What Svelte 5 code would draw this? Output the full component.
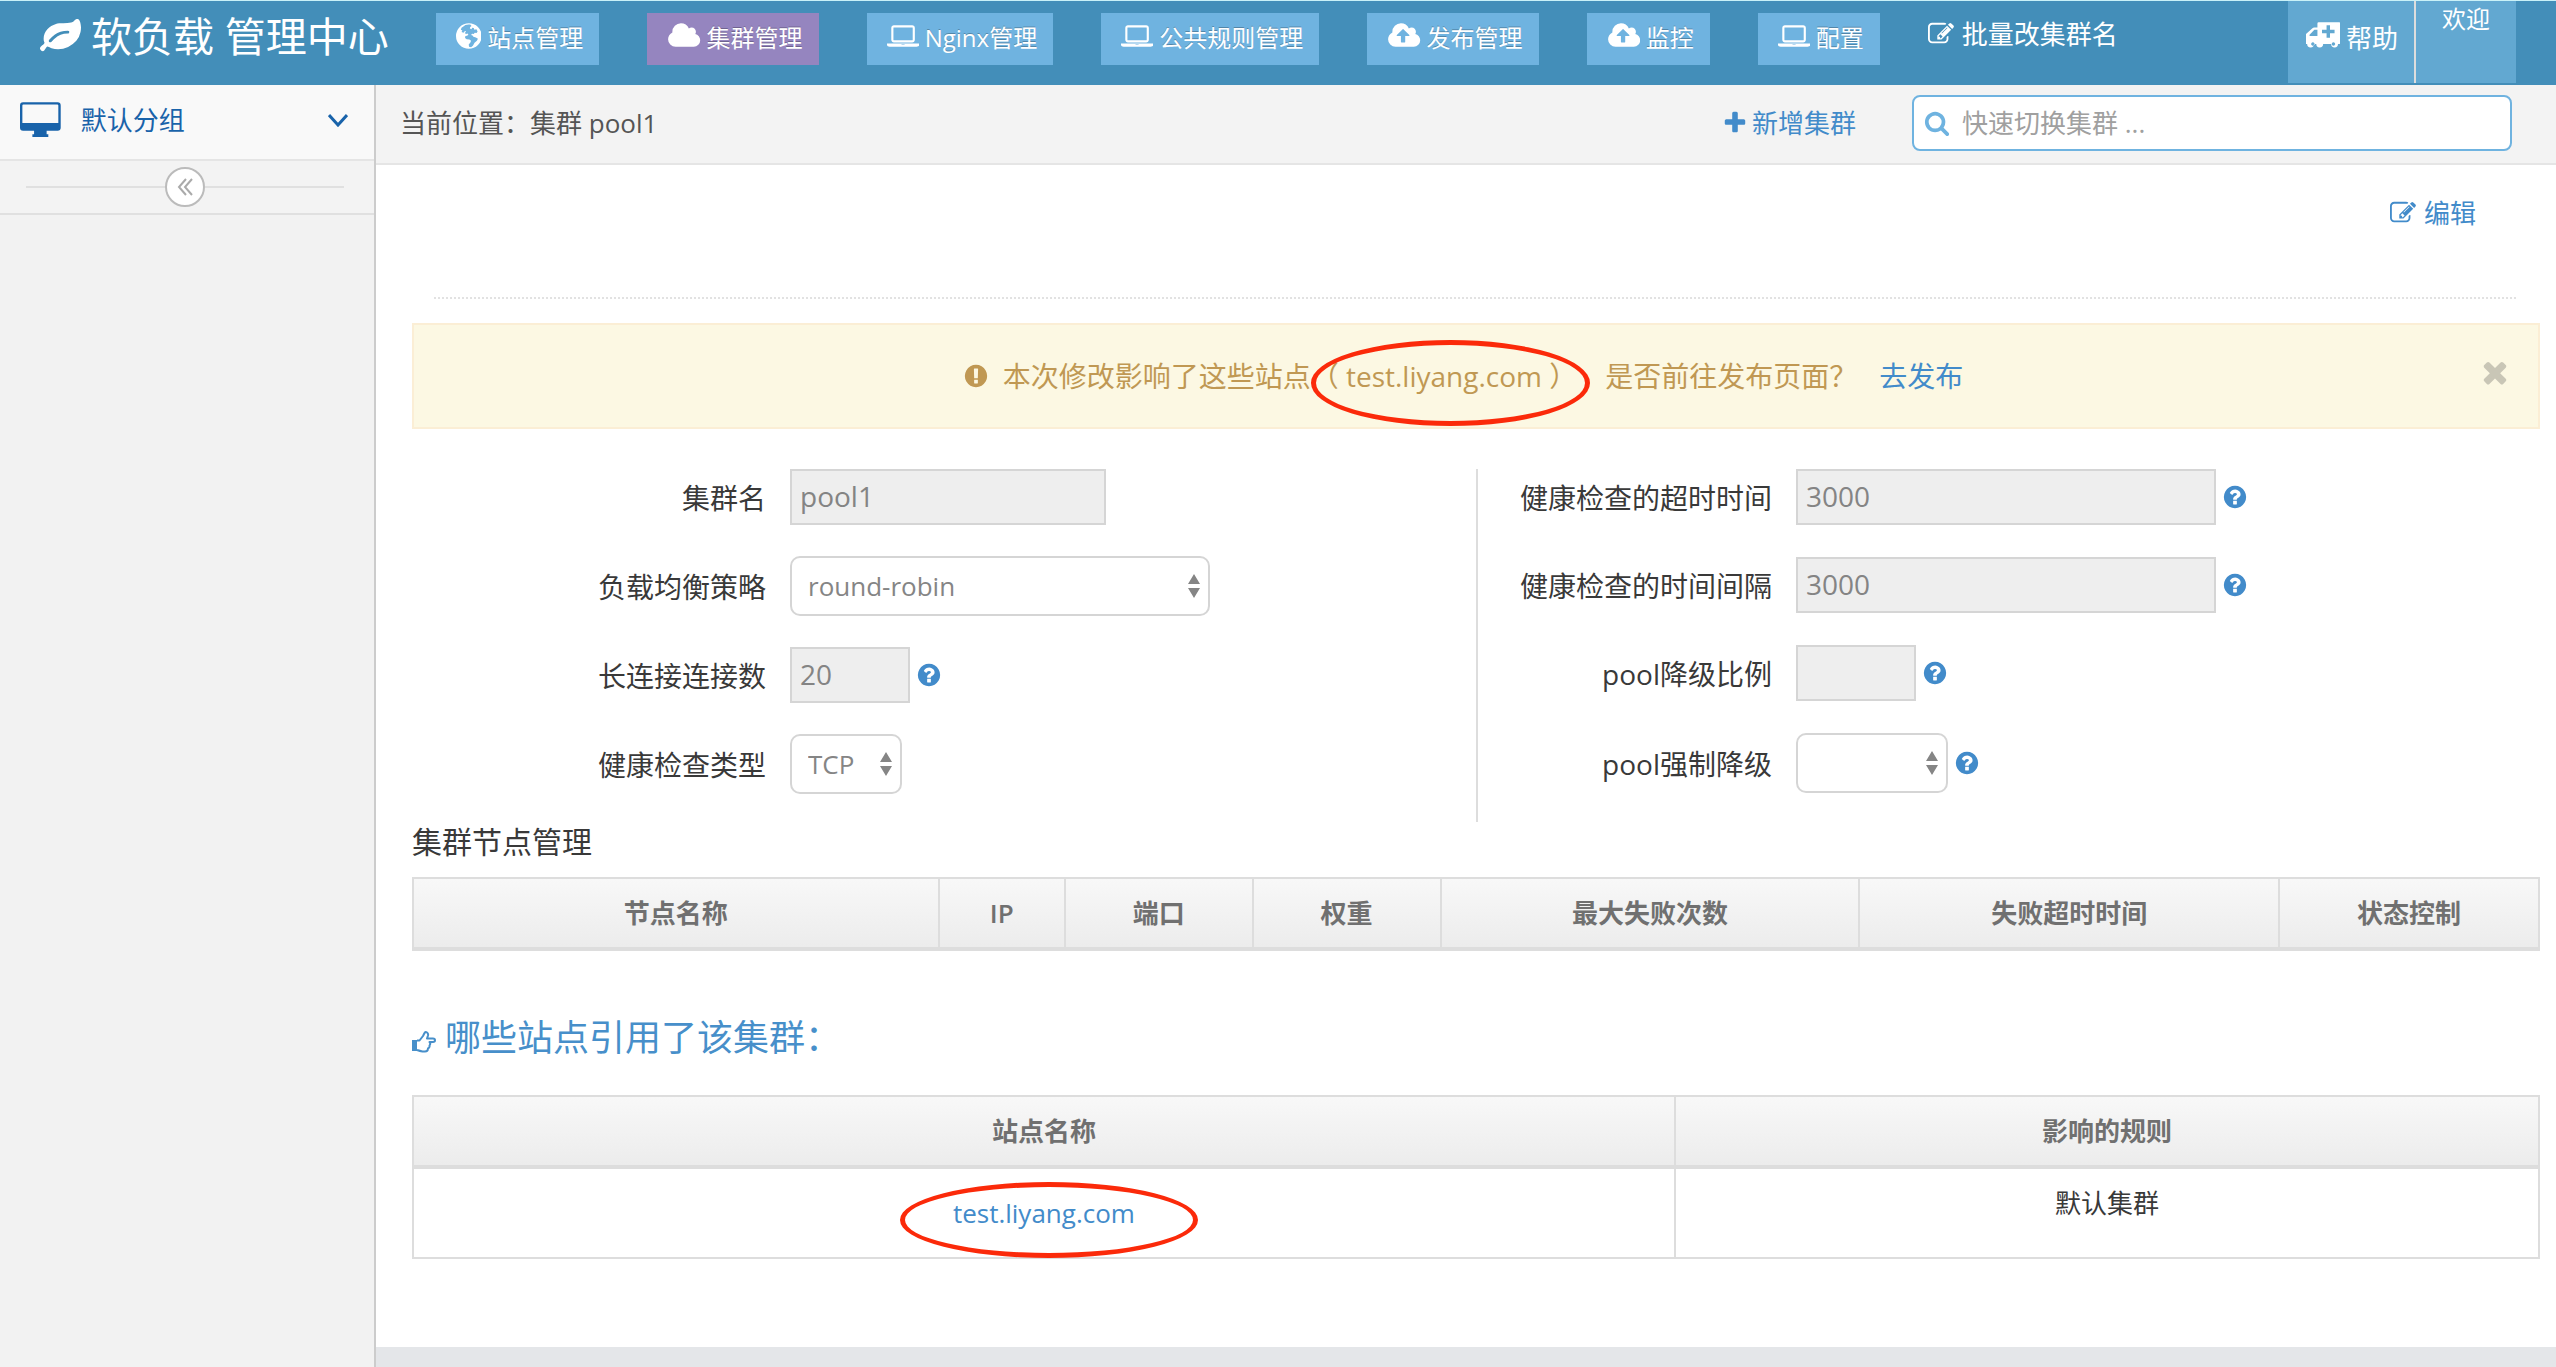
<script lang="ts">
	interface Icon {
		w: number;
		d: string;
	}

	const cloud = 'M1984 1152q0 159-112.5 271.5t-271.5 112.5h-1088q-185 0-316.5-131.5t-131.5-316.5q0-132 71-241.5t187-163.5q-2-28-2-43 0-212 150-362t362-150q158 0 286.5 88t187.5 230q70-62 166-62 106 0 181 75t75 181q0 75-41 138 129 30 213 134.5t84 239.5z';

	// Glyphs on a 1792 unit em, w is the advance
	const icons: Record<string, Icon> = {
		leaf: { w: 1792, d: 'M1280 704q0-26-19-45t-45-19q-172 0-318 49.5t-259.5 134-235.5 219.5q-19 21-19 45 0 26 19 45t45 19q24 0 45-19 27-24 74-71t67-66q137-124 268.5-176t313.5-52q26 0 45-19t19-45zm512-198q0 95-20 193-46 224-184.5 383t-357.5 268q-214 108-438 108-148 0-286-47-15-5-88-42t-96-37q-16 0-39.5 32t-45 70-52.5 70-60 32q-43 0-63.5-17.5t-45.5-59.5q-2-4-6-11t-5.5-10-3-9.5-1.5-13.5q0-35 31-73.5t68-65.5 68-56 31-48q0-4-14-38t-16-44q-9-51-9-104 0-115 43.5-220t119-184.5 170.5-139 204-95.5q55-18 145-25.5t179.5-9 178.5-6 163.5-24 113.5-56.5l29.5-29.5 29.5-28 27-20 36.5-16 43.5-4.5q39 0 70.5 46t47.5 112 24 124 8 96z' },
		globe: { w: 1536, d: 'M768 128a768 768 0 1 1 0 1536a768 768 0 1 1 0-1536zM850 215Q700 190 560 245L440 330L330 400L290 520L380 560L330 650L450 700L500 620L560 590L600 640L520 720L600 780L690 740L740 820L660 880L560 900L540 1010L640 1090L800 1110L900 1180L860 1290L760 1400L780 1540L900 1570L1010 1480L1110 1300L1250 1180L1310 1060L1190 990L1040 940L990 860L900 830L960 760L1060 780L1120 700L1230 720L1290 620L1220 500L1100 520L1060 420L960 400L930 500L830 450L850 360L930 300z' },
		cloud: { w: 1984, d: cloud },
		upload: { w: 1984, d: 'M1344 864q0-14-9-23l-352-352q-9-9-23-9t-23 9l-351 351q-10 12-10 24 0 14 9 23t23 9h224v352q0 13 9.5 22.5t22.5 9.5h192q13 0 22.5-9.5t9.5-22.5v-352h224q13 0 22.5-9.5t9.5-22.5z' + cloud },
		laptop: { w: 1920, d: 'M416 1280q-66 0-113-47t-47-113v-704q0-66 47-113t113-47h1088q66 0 113 47t47 113v704q0 66-47 113t-113 47h-1088zm-32-864v704q0 13 9.5 22.5t22.5 9.5h1088q13 0 22.5-9.5t9.5-22.5v-704q0-13-9.5-22.5t-22.5-9.5h-1088q-13 0-22.5 9.5t-9.5 22.5zm1376 928h160v96q0 40-47 68t-113 28h-1600q-66 0-113-28t-47-68v-96h1760zm-720 96q16 0 16-16t-16-16h-160q-16 0-16 16t16 16h160z' },
		edit: { w: 1792, d: 'M888 1184l116-116-152-152-116 116v56h96v96h56zm440-720q-16-16-33 1l-350 350q-17 17-1 33t33-1l350-350q17-17 1-33zm80 594v190q0 119-84.5 203.5t-203.5 84.5h-832q-119 0-203.5-84.5t-84.5-203.5v-832q0-119 84.5-203.5t203.5-84.5h832q63 0 117 25 15 7 18 23 3 17-9 29l-49 49q-14 14-32 8-23-6-45-6h-832q-66 0-113 47t-47 113v832q0 66 47 113t113 47h832q66 0 113-47t47-113v-126q0-13 9-22l64-64q15-15 35-7t20 29zm-96-738l288 288-672 672h-288v-288zm444 132l-92 92-288-288 92-92q28-28 68-28t68 28l152 152q28 28 28 68t-28 68z' },
		ambulance: { w: 1920, d: 'M704 128h1152q64 0 64 64v1088q0 64-64 64h-64a192 192 0 0 1-384 0h-448a192 192 0 0 1-384 0h-128a192 192 0 0 1-384 0h-64q-64 0-64-64V900q0-60 40-100L360 460q40-44 100-44h180V192q0-64 64-64zM470 544L200 820v76h440V544zM1152 288v256h-256v192h256v256h192V736h256V544h-256V288zM384 1248a96 96 0 1 0 1 0zM1536 1248a96 96 0 1 0 1 0z' },
		search: { w: 1792, d: 'M1216 832q0-185-131.5-316.5t-316.5-131.5-316.5 131.5-131.5 316.5 131.5 316.5 316.5 131.5 316.5-131.5 131.5-316.5zm512 832q0 52-38 90t-90 38q-54 0-90-38l-343-342q-179 124-399 124-143 0-273.5-55.5t-225-150-150-225-55.5-273.5 55.5-273.5 150-225 225-150 273.5-55.5 273.5 55.5 225 150 150 225 55.5 273.5q0 220-124 399l343 343q37 37 37 90z' },
		plus: { w: 1792, d: 'M1600 736v192q0 40-28 68t-68 28h-416v416q0 40-28 68t-68 28h-192q-40 0-68-28t-28-68v-416h-416q-40 0-68-28t-28-68v-192q0-40 28-68t68-28h416v-416q0-40 28-68t68-28h192q40 0 68 28t28 68v416h416q40 0 68 28t28 68z' },
		help: { w: 1792, d: 'M1024 1376v-192q0-14-9-23t-23-9h-192q-14 0-23 9t-9 23v192q0 14 9 23t23 9h192q14 0 23-9t9-23zm256-672q0-88-55.5-163t-138.5-116-170-41q-243 0-371 213-15 24 8 42l132 100q7 6 19 6 16 0 25-12 53-68 86-92 34-24 86-24 48 0 85.5 26t37.5 59q0 38-20 61t-68 45q-63 28-115.5 86.5t-52.5 125.5v36q0 14 9 23t23 9h192q14 0 23-9t9-23q0-19 21.5-49.5t54.5-49.5q32-18 49-28.5t46-35 44.5-48 28-60.5 12.5-81zm384 192q0 209-103 385.5t-279.5 279.5-385.5 103-385.5-103-279.5-279.5-103-385.5 103-385.5 279.5-279.5 385.5-103 385.5 103 279.5 279.5 103 385.5z' },
		warn: { w: 1792, d: 'M896 128q209 0 385.5 103t279.5 279.5 103 385.5-103 385.5-279.5 279.5-385.5 103-385.5-103-279.5-279.5-103-385.5 103-385.5 279.5-279.5 385.5-103zm128 1247v-190q0-14-9-23.5t-22-9.5h-192q-13 0-23 10t-10 23v190q0 13 10 23t23 10h192q13 0 22-9.5t9-23.5zm-2-344l18-621q0-12-10-18-10-8-24-8h-220q-14 0-24 8-10 6-10 18l17 621q0 10 10 17.5t24 7.5h185q14 0 23.5-7.5t10.5-17.5z' },
		times: { w: 1792, d: 'M1490 1322q0 40-28 68l-136 136q-28 28-68 28t-68-28l-294-294-294 294q-28 28-68 28t-68-28l-136-136q-28-28-28-68t28-68l294-294-294-294q-28-28-28-68t28-68l136-136q28-28 68-28t68 28l294 294 294-294q28-28 68-28t68 28l136 136q28 28 28 68t-28 68l-294 294 294 294q28 28 28 68z' },
		desktop: { w: 1920, d: 'M144 64h1632q144 0 144 144v1056q0 144-144 144h-520v160h80v128H584v-128h80v-160H144Q0 1408 0 1264V208Q0 64 144 64zM160 160Q112 160 112 208V1040h1696V208q0-48-48-48z' }
	};

	const navItems = [
		{ icon: 'globe', label: '站点管理' },
		{ icon: 'cloud', label: '集群管理', active: true },
		{ icon: 'laptop', label: 'Nginx管理' },
		{ icon: 'laptop', label: '公共规则管理' },
		{ icon: 'upload', label: '发布管理' },
		{ icon: 'upload', label: '监控' },
		{ icon: 'laptop', label: '配置' }
	];

	const nodeColumns = [
		{ title: '节点名称', share: 526 },
		{ title: 'IP', share: 126 },
		{ title: '端口', share: 188 },
		{ title: '权重', share: 188 },
		{ title: '最大失败次数', share: 419 },
		{ title: '失败超时时间', share: 420 },
		{ title: '状态控制', share: 260 }
	];

	const siteColumns = [
		{ title: '站点名称', share: 1263 },
		{ title: '影响的规则', share: 865 }
	];

	const sites = [{ name: 'test.liyang.com', rule: '默认集群' }];

	let showAlert = $state(true);
	let keyword = $state('');
	let strategy = $state('round-robin');
	let checkType = $state('TCP');
	let degrade = $state('');
</script>

{#snippet icon(name: string)}
	<svg class="icon icon-{name}" viewBox="0 0 {icons[name].w} 1792" aria-hidden="true">
		<path fill-rule="evenodd" d={icons[name].d} />
	</svg>
{/snippet}

{#snippet help()}
	<button class="help" type="button" aria-label="help">{@render icon('help')}</button>
{/snippet}

{#snippet arrows()}
	<svg class="arrows" viewBox="0 0 12 24" aria-hidden="true">
		<path d="M6 0l6 10H0zM6 24l6-10H0z" />
	</svg>
{/snippet}

{#snippet head(columns: { title: string; share: number }[])}
	{@const total = columns.reduce((sum, c) => sum + c.share, 0)}
	<thead>
		<tr>
			{#each columns as column (column.title)}
				<th style="width: {(column.share / total) * 100}%">{column.title}</th>
			{/each}
		</tr>
	</thead>
{/snippet}

<div class="page">
	<header class="navbar">
		<a class="brand" href="#home">{@render icon('leaf')}软负载 管理中心</a>
		<nav class="nav">
			{#each navItems as item (item.label)}
				<a class="nav-item" class:active={item.active} href="#nav">{@render icon(item.icon)}{item.label}</a>
			{/each}
			<a class="nav-plain" href="#batch">{@render icon('edit')}批量改集群名</a>
		</nav>
		<div class="user-nav">
			<a class="user-help" href="#help">{@render icon('ambulance')}帮助</a>
			<a class="user-welcome" href="#user">欢迎</a>
		</div>
	</header>

	<div class="body">
		<aside class="sidebar">
			<a class="group" href="#group">
				{@render icon('desktop')}
				<span>默认分组</span>
				<svg class="chevron" viewBox="0 0 20 13" aria-hidden="true"><path d="M1 1l9 10 9-10" /></svg>
			</a>
			<div class="collapse">
				<button type="button" aria-label="collapse">
					<svg viewBox="0 0 16 18" aria-hidden="true"><path d="M9 1L2 9l7 8M15 1L8 9l7 8" /></svg>
				</button>
			</div>
		</aside>

		<main class="main">
			<div class="breadcrumbs">
				<span class="crumb">当前位置：集群 pool1</span>
				<a class="add" href="#add">{@render icon('plus')}新增集群</a>
				<label class="search">
					{@render icon('search')}
					<input type="text" placeholder="快速切换集群 ..." aria-label="快速切换集群" bind:value={keyword} />
				</label>
			</div>

			<div class="content">
				<div class="toolbar">
					<a class="edit" href="#edit">{@render icon('edit')}编辑</a>
				</div>

				{#if showAlert}
					<div class="alert">
						<p>
							{@render icon('warn')}本次修改影响了这些站点<span class="marked">（ test.liyang.com ）</span>
							<span class="question">是否前往发布页面？</span>
							<a href="#publish">去发布</a>
						</p>
						<button type="button" class="close" aria-label="close" onclick={() => (showAlert = false)}>
							{@render icon('times')}
						</button>
					</div>
				{/if}

				<form class="form">
					<div class="column left">
						<div class="row">
							<label for="name">集群名</label>
							<input id="name" class="medium" value="pool1" disabled />
						</div>
						<div class="row">
							<label for="strategy">负载均衡策略</label>
							<div class="select wide">
								<select id="strategy" bind:value={strategy}>
									<option>round-robin</option>
									<option>ip-hash</option>
								</select>
								{@render arrows()}
							</div>
						</div>
						<div class="row">
							<label for="keepalive">长连接连接数</label>
							<input id="keepalive" class="small" value="20" disabled />
							{@render help()}
						</div>
						<div class="row">
							<label for="check">健康检查类型</label>
							<div class="select tiny">
								<select id="check" bind:value={checkType}>
									<option>TCP</option>
									<option>HTTP</option>
								</select>
								{@render arrows()}
							</div>
						</div>
					</div>
					<div class="column right">
						<div class="row">
							<label for="timeout">健康检查的超时时间</label>
							<input id="timeout" class="wide" value="3000" disabled />
							{@render help()}
						</div>
						<div class="row">
							<label for="interval">健康检查的时间间隔</label>
							<input id="interval" class="wide" value="3000" disabled />
							{@render help()}
						</div>
						<div class="row">
							<label for="rate">pool降级比例</label>
							<input id="rate" class="small" value="" disabled />
							{@render help()}
						</div>
						<div class="row">
							<label for="degrade">pool强制降级</label>
							<div class="select short">
								<select id="degrade" bind:value={degrade}>
									<option value=""></option>
									<option value="on">on</option>
								</select>
								{@render arrows()}
							</div>
							{@render help()}
						</div>
					</div>
				</form>

				<h4>集群节点管理</h4>
				<table>
					{@render head(nodeColumns)}
				</table>

				<h3>
					<svg class="hand" viewBox="0 0 24 22" aria-hidden="true">
						<path class="cuff" d="M0 9h5v11H0z" />
						<path d="M5 9.5h2.5L11 5l1.5-3q1-1.5 2.5-.5t1 3L15 7.5h6q2 0 2 1.75T21 11h-3.5q1.5 1.5 0 3.5 .5 2-1.5 3 0 3-3 3h-2.5Q8 20 5 19" />
					</svg>
					哪些站点引用了该集群：
				</h3>
				<table>
					{@render head(siteColumns)}
					<tbody>
						{#each sites as site (site.name)}
							<tr>
								<td class="site-cell"><a class="marked" href="#site">{site.name}</a></td>
								<td>{site.rule}</td>
							</tr>
						{/each}
					</tbody>
				</table>
			</div>
			<div class="footer"></div>
		</main>
	</div>
</div>

<style>
	:global(body) {
		margin: 0;
	}

	.page {
		display: flex;
		flex-direction: column;
		min-height: 100vh;
		font-family: 'Open Sans', 'Noto Sans CJK SC', sans-serif;
		font-size: 26px;
		line-height: 36px;
		color: #393939;
		background: #fff;
	}

	.page * {
		box-sizing: border-box;
	}

	a {
		color: #428bca;
		text-decoration: none;
	}

	button {
		padding: 0;
		border: 0;
		background: none;
		cursor: pointer;
	}

	.icon {
		flex: none;
		height: 26px;
		fill: currentColor;
	}

	/* navbar */
	.navbar {
		display: flex;
		align-items: flex-start;
		height: 85px;
		padding: 0 40px;
		border-top: 1px solid #c9f1f8;
		background: #438eb9;
	}

	.navbar a {
		display: flex;
		align-items: center;
		color: #fff;
		white-space: nowrap;
	}

	.brand {
		gap: 10px;
		margin-right: 47px;
		padding-top: 7px;
		font-size: 41px;
		line-height: 56px;
	}

	.icon-leaf {
		height: 41px;
	}

	.nav {
		display: flex;
		flex: 1;
		gap: 48px;
		padding-top: 12px;
	}

	.nav-item {
		gap: 6px;
		height: 52px;
		padding: 0 16px 2px 20px;
		font-size: 24px;
		text-shadow: 0 -1px 0 rgba(0, 0, 0, 0.25);
		background: #6fb3e0;
	}

	.nav-item .icon {
		height: 30px;
		margin-top: -4px;
	}

	.nav-item.active {
		background: #9585bf;
	}

	.nav-plain {
		gap: 8px;
		height: 42px;
	}

	.user-nav {
		display: flex;
		height: 82px;
	}

	.user-nav a {
		align-items: flex-start;
		background: #62a8d1;
	}

	.user-help {
		gap: 6px;
		padding: 19px 16px 0 18px;
	}

	.icon-ambulance {
		height: 32px;
	}

	.user-nav .user-welcome {
		width: 102px;
		padding-left: 26px;
		border-left: 2px solid #ddd;
		font-size: 24px;
	}

	/* sidebar */
	.body {
		display: flex;
		flex: 1;
	}

	.sidebar {
		flex: none;
		width: 376px;
		border-right: 2px solid #ccc;
		background: #f2f2f2;
	}

	.group {
		display: flex;
		align-items: center;
		gap: 20px;
		height: 76px;
		padding: 0 26px 4px 20px;
		border-bottom: 2px solid #e5e5e5;
		color: #1963aa;
		background: #f9f9f9;
	}

	.icon-desktop {
		height: 38px;
	}

	.chevron {
		width: 20px;
		margin-left: auto;
		fill: none;
		stroke: currentColor;
		stroke-width: 3;
	}

	.collapse {
		display: flex;
		align-items: center;
		height: 54px;
		padding: 0 30px 0 26px;
		border-bottom: 2px solid #e0e0e0;
		background: #f3f3f3;
	}

	.collapse::before,
	.collapse::after {
		content: '';
		flex: 1;
		height: 2px;
		background: #e0e0e0;
	}

	.collapse button {
		display: flex;
		align-items: center;
		justify-content: center;
		width: 40px;
		height: 40px;
		border: 2px solid #bbb;
		border-radius: 50%;
		background: #fff;
	}

	.collapse svg {
		width: 16px;
		fill: none;
		stroke: #aaa;
		stroke-width: 2;
	}

	/* main */
	.main {
		display: flex;
		flex: 1;
		flex-direction: column;
		min-width: 0;
	}

	.breadcrumbs {
		display: flex;
		align-items: center;
		height: 80px;
		padding: 0 44px 2px 24px;
		border-bottom: 2px solid #e5e5e5;
		background: #f3f3f3;
	}

	.crumb {
		flex: 1;
		color: #555;
	}

	.add {
		display: flex;
		align-items: center;
		gap: 4px;
		margin-right: 56px;
	}

	.search {
		display: flex;
		align-items: center;
		gap: 12px;
		width: 600px;
		height: 56px;
		padding: 0 10px;
		border: 2px solid #6fb3e0;
		border-radius: 8px;
		background: #fff;
	}

	.search .icon {
		color: #6fb3e0;
	}

	.search input {
		flex: 1;
		min-width: 0;
		padding: 0;
		border: 0;
		outline: 0;
		font: inherit;
		background: none;
	}

	.search input::placeholder {
		color: #a0a0a0;
	}

	.content {
		flex: 1;
		padding: 0 16px 40px 36px;
	}

	.toolbar {
		display: flex;
		justify-content: flex-end;
		margin: 0 24px 24px 22px;
		padding: 30px 40px 66px 0;
		border-bottom: 2px dotted #e2e2e2;
	}

	.edit {
		display: flex;
		align-items: center;
		gap: 8px;
	}

	.alert {
		display: flex;
		align-items: center;
		height: 106px;
		padding: 0 32px 0 28px;
		border: 2px solid #fbeed5;
		color: #c09853;
		background: #fcf8e3;
	}

	.alert p {
		display: flex;
		flex: 1;
		justify-content: center;
		margin: 0;
		font-size: 28px;
	}

	.icon-warn {
		margin: 5px 14px 0 0;
	}

	.question {
		margin: 0 22px 0 28px;
	}

	/* hand-drawn ring round the site name */
	.marked {
		position: relative;
	}

	.marked::after {
		content: '';
		position: absolute;
		inset: -18px -13px -32px 0;
		border: 5px solid #fb2a0a;
		border-radius: 50%;
		pointer-events: none;
	}

	.close {
		display: flex;
		justify-content: center;
		width: 22px;
		color: #c9c6b6;
	}

	.close .icon {
		height: 34px;
		margin-top: -8px;
	}

	/* form */
	.form {
		display: grid;
		grid-template-columns: 1fr 1fr;
		margin-top: 40px;
		font-size: 28px;
	}

	.column {
		display: flex;
		flex-direction: column;
		height: 353px;
	}

	.left {
		gap: 31px;
	}

	.right {
		gap: 32px;
		border-left: 2px solid #ddd;
	}

	.row {
		display: flex;
		align-items: center;
	}

	.row label {
		flex: none;
		width: 354px;
		margin-right: 24px;
		padding-top: 1px;
		text-align: right;
	}

	.right label {
		width: 294px;
	}

	.row input {
		height: 56px;
		padding: 0 8px 2px;
		border: 2px solid #d5d5d5;
		font: inherit;
		color: #848484;
		background: #eee;
	}

	.select {
		position: relative;
		flex: none;
		height: 60px;
	}

	.select select {
		width: 100%;
		height: 100%;
		padding: 0 16px;
		border: 2px solid #d5d5d5;
		border-radius: 10px;
		appearance: none;
		font: inherit;
		font-size: 26px;
		color: #858585;
		background: #fff;
	}

	.arrows {
		position: absolute;
		top: 18px;
		right: 10px;
		width: 12px;
		fill: #858585;
		pointer-events: none;
	}

	.tiny {
		width: 112px;
	}

	.small {
		width: 120px;
	}

	.short {
		width: 152px;
	}

	.medium {
		width: 316px;
	}

	.wide {
		width: 420px;
	}

	.help {
		display: flex;
		margin-left: 6px;
		color: #428bca;
	}

	/* tables */
	h4 {
		margin: 0 0 15px;
		font-size: 30px;
		font-weight: 400;
		line-height: 40px;
	}

	h3 {
		display: flex;
		align-items: center;
		gap: 9px;
		margin: 60px 0 30px;
		font-size: 36px;
		font-weight: 400;
		line-height: 54px;
		color: #478fca;
	}

	.hand {
		width: 24px;
		margin-top: 8px;
		fill: none;
		stroke: currentColor;
		stroke-width: 2;
		stroke-linejoin: round;
	}

	.cuff {
		fill: currentColor;
		stroke: none;
	}

	table {
		width: 100%;
		border-collapse: collapse;
		table-layout: fixed;
	}

	th,
	td {
		border: 2px solid #ddd;
		text-align: center;
	}

	th {
		padding: 16px 0;
		border-bottom-width: 4px;
		font-weight: 600;
		color: #707070;
		background: linear-gradient(#f8f8f8, #ececec);
	}

	td {
		padding: 16px 0 36px;
	}

	.site-cell {
		padding: 26px 0;
	}

	.site-cell .marked::after {
		inset: -13px -63px -27px -53px;
	}

	.footer {
		height: 20px;
		background: #e4e6e9;
	}
</style>
